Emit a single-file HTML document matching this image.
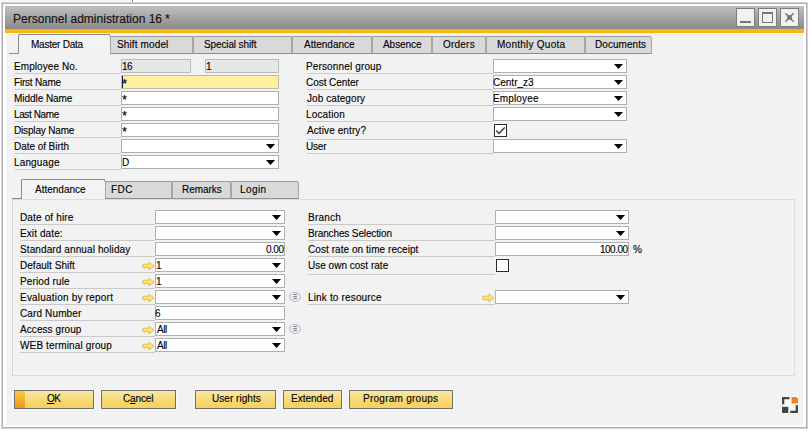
<!DOCTYPE html><html><head><meta charset="utf-8"><title>Personnel administration</title><style>
html,body{margin:0;padding:0}
body{width:812px;height:432px;overflow:hidden;background:#fff;font-family:"Liberation Sans",sans-serif;font-size:10px;color:#000;position:relative}
div,span{box-sizing:border-box}
.a{position:absolute}
.t{position:absolute;white-space:nowrap;height:14px;line-height:14px;-webkit-text-stroke:0.12px #000}
.wino{left:1px;top:2px;width:807px;height:427px;border:1px solid #d3d3d3}
.win{left:2px;top:3px;width:805px;height:425px;background:#fff;border:1px solid #b0b0b0}
.title{left:5px;top:6px;width:799px;height:23px;background:linear-gradient(#c0c0c0,#8a8a8a)}
.orange{left:5px;top:29px;width:799px;height:4px;background:#fbb616}
.content{left:6px;top:33px;width:797px;height:392px;background:#f2f2f2}
.wb{top:8px;width:19px;height:19px;background:#f1f1f1;border:1px solid #7d7d7d}
.ul{height:1px;background:#c9c9c9}
.fld{height:14px;background:#fff;border:1px solid #adb1b3}
.ro{background:#e7e7e7;border-color:#b9bcbc}
.yl{background:#fdeea0;border-color:#bdbba8}
.tab{height:18px;background:#d9d9d9;border:1px solid #a6a6a6;border-top-color:#9a9a9a;border-bottom-color:#8e8e8e;border-radius:1px 1px 0 0}
.tabon{background:#f3f3f3;border:1px solid #8c8c8c;border-bottom:none;border-right:none;border-radius:2px 0 0 0}
.btn{top:390px;height:19px;border:1px solid #6e6e6e;box-shadow:0 0 0 1px #f7f7f7;background:linear-gradient(#f9e7a8,#f6d973 55%,#f5d060)}
.cb{width:13px;height:13px;background:#fff;border:1px solid #2b2b2b}
</style></head><body>
<div class="a" style="left:0;top:0;width:129px;height:2px;background:#f7f7f7"></div>
<div class="a" style="left:132px;top:0;width:1px;height:2px;background:#8a8a8a"></div>
<svg width="0" height="0" style="position:absolute"><defs><linearGradient id="lg" x1="0" y1="0" x2="0" y2="1"><stop offset="0" stop-color="#fdf3b4"/><stop offset="1" stop-color="#f6d645"/></linearGradient></defs></svg>
<div class="a wino"></div><div class="a win"></div>
<div class="a title"></div>
<div class="t" style="left:13px;top:8px;letter-spacing:0.01px;font-size:12px;height:23px;line-height:23px;color:#111">Personnel administration 16 *</div>
<div class="a orange"></div>
<div class="a content"></div>
<div class="a wb" style="left:736px"><div class="a" style="left:3px;top:12px;width:11px;height:2px;background:#777"></div></div>
<div class="a wb" style="left:758px"><div class="a" style="left:3px;top:3px;width:11px;height:11px;border:1px solid #777;border-top:2px solid #777"></div></div>
<div class="a wb" style="left:780px"><svg class="a" style="left:3px;top:3px" width="11" height="11" viewBox="0 0 11 11"><path d="M1.8 1.8L9.2 9.2M9.2 1.8L1.8 9.2" stroke="#777" stroke-width="1.5" stroke-linecap="round"/><rect x="3.2" y="3.2" width="4.6" height="4.6" fill="#777"/></svg></div>
<div class="a" style="left:9px;top:53px;width:10px;height:1px;background:#8c8c8c"></div>
<div class="a tab" style="left:110px;top:36px;width:83px"></div>
<div class="t" style="left:117px;top:38px;letter-spacing:0.13px">Shift model</div>
<div class="a tab" style="left:193px;top:36px;width:99px"></div>
<div class="t" style="left:204px;top:38px;letter-spacing:-0.12px">Special shift</div>
<div class="a tab" style="left:292px;top:36px;width:80px"></div>
<div class="t" style="left:304px;top:38px">Attendance</div>
<div class="a tab" style="left:372px;top:36px;width:60px"></div>
<div class="t" style="left:383px;top:38px;letter-spacing:-0.05px">Absence</div>
<div class="a tab" style="left:432px;top:36px;width:54px"></div>
<div class="t" style="left:443px;top:38px;letter-spacing:0.22px">Orders</div>
<div class="a tab" style="left:486px;top:36px;width:99px"></div>
<div class="t" style="left:497px;top:38px;letter-spacing:0.25px">Monthly Quota</div>
<div class="a tab" style="left:585px;top:36px;width:67px;border-radius:1px 3px 0 0"></div>
<div class="t" style="left:595px;top:38px;letter-spacing:0.06px">Documents</div>
<div class="a tabon" style="left:18px;top:34px;width:92px;height:20px"></div>
<svg class="a" style="left:108px;top:34px" width="3" height="3" viewBox="0 0 3 3"><path d="M0 0.5H1L2.5 3" fill="none" stroke="#8c8c8c" stroke-width="1"/></svg>
<div class="t" style="left:31px;top:38px;letter-spacing:-0.23px">Master Data</div>
<div class="t" style="left:14px;top:60px;letter-spacing:0.07px">Employee No.</div>
<div class="a ul" style="left:15px;top:73px;width:106px"></div>
<div class="t" style="left:14px;top:76px;letter-spacing:-0.20px">First Name</div>
<div class="a ul" style="left:15px;top:89px;width:106px"></div>
<div class="t" style="left:14px;top:92px;letter-spacing:-0.05px">Middle Name</div>
<div class="a ul" style="left:15px;top:105px;width:106px"></div>
<div class="t" style="left:14px;top:108px;letter-spacing:-0.39px">Last Name</div>
<div class="a ul" style="left:15px;top:121px;width:106px"></div>
<div class="t" style="left:14px;top:124px;letter-spacing:-0.17px">Display Name</div>
<div class="a ul" style="left:15px;top:137px;width:106px"></div>
<div class="t" style="left:14px;top:140px;letter-spacing:-0.05px">Date of Birth</div>
<div class="a ul" style="left:15px;top:153px;width:106px"></div>
<div class="t" style="left:14px;top:156px;letter-spacing:0.14px">Language</div>
<div class="a ul" style="left:15px;top:169px;width:106px"></div>
<div class="a fld ro" style="left:121px;top:59px;width:70px"></div>
<div class="t" style="left:122px;top:60px;letter-spacing:-0.50px">16</div>
<div class="a fld ro" style="left:205px;top:59px;width:74px"></div>
<div class="t" style="left:206px;top:60px;letter-spacing:-0.50px">1</div>
<div class="a fld yl" style="left:121px;top:75px;width:158px"></div>
<div class="t" style="left:122px;top:77px;letter-spacing:-0.50px;font-size:13px">*</div>
<div class="a" style="left:122px;top:76px;width:1px;height:12px;background:#15154a"></div>
<div class="a fld " style="left:121px;top:91px;width:158px"></div>
<div class="t" style="left:122px;top:93px;letter-spacing:-0.50px;font-size:13px">*</div>
<div class="a fld " style="left:121px;top:107px;width:158px"></div>
<div class="t" style="left:122px;top:109px;letter-spacing:-0.50px;font-size:13px">*</div>
<div class="a fld " style="left:121px;top:123px;width:158px"></div>
<div class="t" style="left:122px;top:125px;letter-spacing:-0.50px;font-size:13px">*</div>
<div class="a fld " style="left:121px;top:139px;width:158px"></div>
<svg class="a" style="left:266px;top:144px" width="9" height="5" viewBox="0 0 9 5"><path d="M0 0H9L4.5 5Z" fill="#000"/></svg>
<div class="a fld " style="left:121px;top:155px;width:158px"></div>
<svg class="a" style="left:266px;top:160px" width="9" height="5" viewBox="0 0 9 5"><path d="M0 0H9L4.5 5Z" fill="#000"/></svg>
<div class="t" style="left:122px;top:156px;letter-spacing:-0.50px">D</div>
<div class="t" style="left:306px;top:60px;letter-spacing:0.14px">Personnel group</div>
<div class="a ul" style="left:307px;top:73px;width:186px"></div>
<div class="t" style="left:306px;top:76px;letter-spacing:-0.05px">Cost Center</div>
<div class="a ul" style="left:307px;top:89px;width:186px"></div>
<div class="t" style="left:307px;top:92px;letter-spacing:0.07px">Job category</div>
<div class="a ul" style="left:307px;top:105px;width:186px"></div>
<div class="t" style="left:306px;top:108px;letter-spacing:0.14px">Location</div>
<div class="a ul" style="left:307px;top:121px;width:186px"></div>
<div class="t" style="left:307px;top:124px;letter-spacing:0.10px">Active entry?</div>
<div class="a ul" style="left:307px;top:139px;width:186px"></div>
<div class="t" style="left:306px;top:140px;letter-spacing:-0.20px">User</div>
<div class="a ul" style="left:307px;top:153px;width:186px"></div>
<div class="a fld " style="left:493px;top:59px;width:134px"></div>
<svg class="a" style="left:614px;top:64px" width="9" height="5" viewBox="0 0 9 5"><path d="M0 0H9L4.5 5Z" fill="#000"/></svg>
<div class="a fld " style="left:493px;top:75px;width:134px"></div>
<svg class="a" style="left:614px;top:80px" width="9" height="5" viewBox="0 0 9 5"><path d="M0 0H9L4.5 5Z" fill="#000"/></svg>
<div class="t" style="left:493px;top:76px;letter-spacing:0.01px">Centr_z3</div>
<div class="a fld " style="left:493px;top:91px;width:134px"></div>
<svg class="a" style="left:614px;top:96px" width="9" height="5" viewBox="0 0 9 5"><path d="M0 0H9L4.5 5Z" fill="#000"/></svg>
<div class="t" style="left:493px;top:92px;letter-spacing:0.14px">Employee</div>
<div class="a fld " style="left:493px;top:107px;width:134px"></div>
<svg class="a" style="left:614px;top:112px" width="9" height="5" viewBox="0 0 9 5"><path d="M0 0H9L4.5 5Z" fill="#000"/></svg>
<div class="a fld " style="left:493px;top:139px;width:134px"></div>
<svg class="a" style="left:614px;top:144px" width="9" height="5" viewBox="0 0 9 5"><path d="M0 0H9L4.5 5Z" fill="#000"/></svg>
<div class="a cb" style="left:494px;top:124px"><svg class="a" style="left:0;top:0" width="11" height="11" viewBox="0 0 11 11"><path d="M1.2 5.6L3.9 8.4L9.8 2.5" fill="none" stroke="#3e3e3e" stroke-width="1.5"/></svg></div>
<div class="a" style="left:12px;top:199px;width:783px;height:177px;border:1px solid #dcdcdc;border-left-color:#d4d4d4"></div>
<div class="a" style="left:12px;top:198px;width:10px;height:1px;background:#858585"></div>
<div class="a tab" style="left:105px;top:181px;width:67px"></div>
<div class="t" style="left:111px;top:183px;letter-spacing:0.40px">FDC</div>
<div class="a tab" style="left:172px;top:181px;width:59px"></div>
<div class="t" style="left:182px;top:183px;letter-spacing:-0.05px">Remarks</div>
<div class="a tab" style="left:231px;top:181px;width:68px;border-radius:1px 3px 0 0"></div>
<div class="t" style="left:240px;top:183px;letter-spacing:0.40px">Login</div>
<div class="a tabon" style="left:21px;top:179px;width:84px;height:20px"></div>
<svg class="a" style="left:103px;top:179px" width="3" height="3" viewBox="0 0 3 3"><path d="M0 0.5H1L2.5 3" fill="none" stroke="#8c8c8c" stroke-width="1"/></svg>
<div class="t" style="left:35px;top:183px">Attendance</div>
<div class="t" style="left:20px;top:211px;letter-spacing:0.15px">Date of hire</div>
<div class="a ul" style="left:20px;top:224px;width:135px"></div>
<div class="t" style="left:20px;top:227px;letter-spacing:0.10px">Exit date:</div>
<div class="a ul" style="left:20px;top:240px;width:135px"></div>
<div class="t" style="left:20px;top:243px;letter-spacing:0.11px">Standard annual holiday</div>
<div class="a ul" style="left:20px;top:256px;width:135px"></div>
<div class="t" style="left:20px;top:259px;letter-spacing:0.03px">Default Shift</div>
<div class="a ul" style="left:20px;top:272px;width:135px"></div>
<div class="t" style="left:20px;top:275px;letter-spacing:0.13px">Period rule</div>
<div class="a ul" style="left:20px;top:288px;width:135px"></div>
<div class="t" style="left:20px;top:291px;letter-spacing:0.21px">Evaluation by report</div>
<div class="a ul" style="left:20px;top:304px;width:135px"></div>
<div class="t" style="left:20px;top:307px;letter-spacing:0.13px">Card Number</div>
<div class="a ul" style="left:20px;top:320px;width:135px"></div>
<div class="t" style="left:20px;top:323px;letter-spacing:0.07px">Access group</div>
<div class="a ul" style="left:20px;top:336px;width:135px"></div>
<div class="t" style="left:20px;top:339px;letter-spacing:0.14px">WEB terminal group</div>
<div class="a ul" style="left:20px;top:352px;width:135px"></div>
<div class="a fld " style="left:155px;top:210px;width:130px"></div>
<svg class="a" style="left:272px;top:215px" width="9" height="5" viewBox="0 0 9 5"><path d="M0 0H9L4.5 5Z" fill="#000"/></svg>
<div class="a fld " style="left:155px;top:226px;width:130px"></div>
<svg class="a" style="left:272px;top:231px" width="9" height="5" viewBox="0 0 9 5"><path d="M0 0H9L4.5 5Z" fill="#000"/></svg>
<div class="a fld " style="left:155px;top:242px;width:130px"></div>
<div class="t" style="left:266px;top:243px;letter-spacing:-0.50px">0.00</div>
<div class="a fld " style="left:155px;top:258px;width:130px"></div>
<svg class="a" style="left:272px;top:263px" width="9" height="5" viewBox="0 0 9 5"><path d="M0 0H9L4.5 5Z" fill="#000"/></svg>
<svg class="a" style="left:142.0px;top:260.8px" width="13" height="10" viewBox="0 0 13 10"><path d="M1 3.2H7V1.2L12 5L7 8.8V6.8H1Z" fill="url(#lg)" stroke="#e2c040" stroke-width="1" stroke-linejoin="round"/></svg>
<div class="t" style="left:156px;top:259px;letter-spacing:-0.50px">1</div>
<div class="a fld " style="left:155px;top:274px;width:130px"></div>
<svg class="a" style="left:272px;top:279px" width="9" height="5" viewBox="0 0 9 5"><path d="M0 0H9L4.5 5Z" fill="#000"/></svg>
<svg class="a" style="left:142.0px;top:276.8px" width="13" height="10" viewBox="0 0 13 10"><path d="M1 3.2H7V1.2L12 5L7 8.8V6.8H1Z" fill="url(#lg)" stroke="#e2c040" stroke-width="1" stroke-linejoin="round"/></svg>
<div class="t" style="left:156px;top:275px;letter-spacing:-0.50px">1</div>
<div class="a fld " style="left:155px;top:290px;width:130px"></div>
<svg class="a" style="left:272px;top:295px" width="9" height="5" viewBox="0 0 9 5"><path d="M0 0H9L4.5 5Z" fill="#000"/></svg>
<svg class="a" style="left:142.0px;top:292.8px" width="13" height="10" viewBox="0 0 13 10"><path d="M1 3.2H7V1.2L12 5L7 8.8V6.8H1Z" fill="url(#lg)" stroke="#e2c040" stroke-width="1" stroke-linejoin="round"/></svg>
<svg class="a" style="left:289px;top:291px" width="13" height="12" viewBox="0 0 13 12"><ellipse cx="6" cy="5.85" rx="5.4" ry="4.6" fill="#eceef5" stroke="#b2b9cc" stroke-width="1"/><path d="M4.3 3.5H8M4.3 5.5H8M4.3 7.5H8" stroke="#858585" stroke-width="1"/></svg>
<div class="a fld " style="left:155px;top:306px;width:130px"></div>
<div class="t" style="left:155px;top:307px;letter-spacing:-0.50px">6</div>
<div class="a fld " style="left:155px;top:322px;width:130px"></div>
<svg class="a" style="left:272px;top:327px" width="9" height="5" viewBox="0 0 9 5"><path d="M0 0H9L4.5 5Z" fill="#000"/></svg>
<svg class="a" style="left:142.0px;top:324.8px" width="13" height="10" viewBox="0 0 13 10"><path d="M1 3.2H7V1.2L12 5L7 8.8V6.8H1Z" fill="url(#lg)" stroke="#e2c040" stroke-width="1" stroke-linejoin="round"/></svg>
<svg class="a" style="left:289px;top:323px" width="13" height="12" viewBox="0 0 13 12"><ellipse cx="6" cy="5.85" rx="5.4" ry="4.6" fill="#eceef5" stroke="#b2b9cc" stroke-width="1"/><path d="M4.3 3.5H8M4.3 5.5H8M4.3 7.5H8" stroke="#858585" stroke-width="1"/></svg>
<div class="t" style="left:157px;top:323px;letter-spacing:-0.50px">All</div>
<div class="a fld " style="left:155px;top:338px;width:130px"></div>
<svg class="a" style="left:272px;top:343px" width="9" height="5" viewBox="0 0 9 5"><path d="M0 0H9L4.5 5Z" fill="#000"/></svg>
<svg class="a" style="left:142.0px;top:340.8px" width="13" height="10" viewBox="0 0 13 10"><path d="M1 3.2H7V1.2L12 5L7 8.8V6.8H1Z" fill="url(#lg)" stroke="#e2c040" stroke-width="1" stroke-linejoin="round"/></svg>
<div class="t" style="left:157px;top:339px;letter-spacing:-0.50px">All</div>
<div class="t" style="left:308px;top:211px;letter-spacing:0.22px">Branch</div>
<div class="a ul" style="left:308px;top:224px;width:187px"></div>
<div class="t" style="left:308px;top:227px;letter-spacing:-0.13px">Branches Selection</div>
<div class="a ul" style="left:308px;top:240px;width:187px"></div>
<div class="t" style="left:308px;top:243px;letter-spacing:0.06px">Cost rate on time receipt</div>
<div class="a ul" style="left:308px;top:256px;width:187px"></div>
<div class="t" style="left:308px;top:259px;letter-spacing:0.01px">Use own cost rate</div>
<div class="a ul" style="left:308px;top:274px;width:187px"></div>
<div class="t" style="left:308px;top:291px;letter-spacing:0.16px">Link to resource</div>
<div class="a ul" style="left:308px;top:304px;width:187px"></div>
<div class="a fld " style="left:495px;top:210px;width:134px"></div>
<svg class="a" style="left:616px;top:215px" width="9" height="5" viewBox="0 0 9 5"><path d="M0 0H9L4.5 5Z" fill="#000"/></svg>
<div class="a fld " style="left:495px;top:226px;width:134px"></div>
<svg class="a" style="left:616px;top:231px" width="9" height="5" viewBox="0 0 9 5"><path d="M0 0H9L4.5 5Z" fill="#000"/></svg>
<div class="a fld " style="left:495px;top:242px;width:134px"></div>
<div class="t" style="left:600px;top:243px;letter-spacing:-0.50px">100.00</div>
<div class="t" style="left:633px;top:243px;letter-spacing:-0.50px">%</div>
<div class="a cb" style="left:496px;top:259px"></div>
<div class="a fld " style="left:495px;top:290px;width:134px"></div>
<svg class="a" style="left:616px;top:295px" width="9" height="5" viewBox="0 0 9 5"><path d="M0 0H9L4.5 5Z" fill="#000"/></svg>
<svg class="a" style="left:482.0px;top:292.8px" width="13" height="10" viewBox="0 0 13 10"><path d="M1 3.2H7V1.2L12 5L7 8.8V6.8H1Z" fill="url(#lg)" stroke="#e2c040" stroke-width="1" stroke-linejoin="round"/></svg>
<div class="a btn" style="left:14px;width:80px"></div>
<div class="t" style="left:47px;top:392px;letter-spacing:-0.50px"><u>O</u>K</div>
<div class="a" style="left:15px;top:391px;width:10px;height:17px;background:linear-gradient(#f9cd3f,#f0941c)"></div>
<div class="a btn" style="left:101px;width:75px"></div>
<div class="t" style="left:123px;top:392px;letter-spacing:-0.14px">C<u>a</u>ncel</div>
<div class="a btn" style="left:195px;width:81px"></div>
<div class="t" style="left:212px;top:392px;letter-spacing:0.04px">User rights</div>
<div class="a btn" style="left:283px;width:59px"></div>
<div class="t" style="left:291px;top:392px;letter-spacing:0.01px">Extended</div>
<div class="a btn" style="left:349px;width:104px"></div>
<div class="t" style="left:363px;top:392px;letter-spacing:0.26px">Program groups</div>
<svg class="a" style="left:781px;top:396px" width="18" height="18" viewBox="0 0 18 18"><rect width="18" height="18" fill="#fff" opacity="0.6"/><path d="M1 8.3V1H8.5V3.2H3.3V8.3Z" fill="#444"/><path d="M10.5 1H14.5Q17 1 17 4V7.5H10.5Z" fill="#f58220"/><rect x="1" y="10.8" width="6.3" height="6.2" fill="#444"/><path d="M17 9.2V17H9.2V14.8H14.7V9.2Z" fill="#444"/></svg>
</body></html>
